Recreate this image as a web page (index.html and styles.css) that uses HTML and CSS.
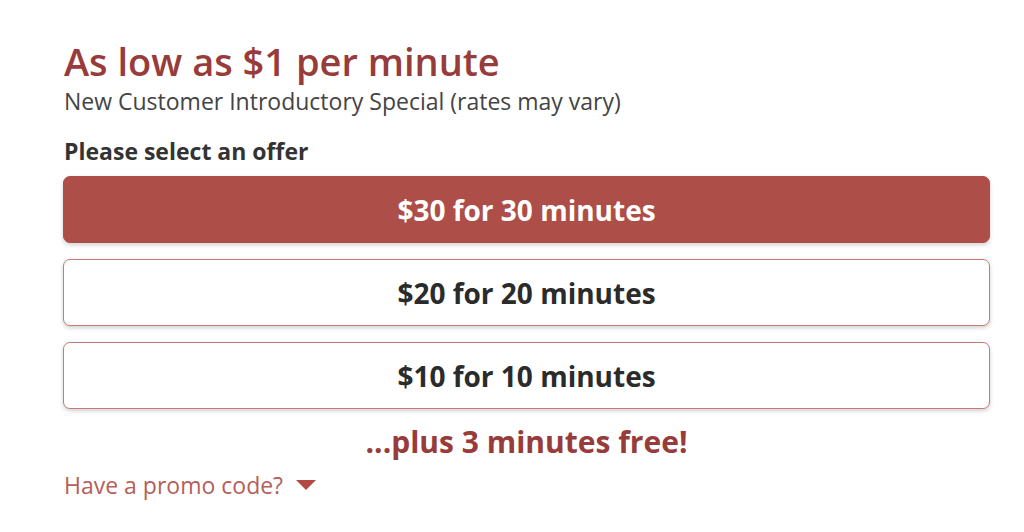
FILE: index.html
```html
<!DOCTYPE html>
<html>
<head>
<meta charset="utf-8">
<link rel="stylesheet" href="styles.css">
</head>
<body>
<div class="wrap">
  <h1 class="title">As low as $1 per minute</h1>
  <p class="sub">New Customer Introductory Special (rates may vary)</p>
  <p class="label">Please select an offer</p>
  <div class="offers">
    <button class="offer selected">$30 for 30 minutes</button>
    <button class="offer">$20 for 20 minutes</button>
    <button class="offer">$10 for 10 minutes</button>
  </div>
  <p class="bonus">...plus 3 minutes free!</p>
  <div class="promo">Have a promo code? <span class="tri"></span></div>
</div>
</body>
</html>
```
FILE: styles.css
```css
html, body { margin: 0; padding: 0; background: #fff; }
body { font-family: "Open Sans", "Liberation Sans", sans-serif; }
.wrap { margin-left: 63px; width: 927px; padding-top: 37px; }
.title { margin: 0 0 1px 1px; font-size: 38px; font-weight: 600; color: #973b3b; line-height: 48px; }
.sub { margin: 0 0 0 1px; font-size: 23px; color: #444; line-height: 30px; }
.label { margin: 20px 0 10px 1px; font-size: 23px; font-weight: 700; color: #333; line-height: 30px; }
.offers { display: flex; flex-direction: column; gap: 16px; }
.offer { height: 67px; border-radius: 7px; border: 1px solid #c77a74; background: #fff; font-family: inherit; font-size: 28px; font-weight: 700; color: #2b2b2b; box-shadow: 0 2px 4px rgba(0,0,0,0.18); padding: 0; }
.offer.selected { background: #ad4e48; border-color: #ad4e48; color: #fff; }
.bonus { margin: 13px 0 0; text-align: center; font-size: 30px; font-weight: 700; color: #973b3b; line-height: 40px; }
.promo { margin: 8px 0 0 1px; font-size: 23px; color: #b5605a; line-height: 30px; display: flex; align-items: center; gap: 13px; }
.tri { width: 0; height: 0; border-left: 10px solid transparent; border-right: 10px solid transparent; border-top: 10px solid #b14a44; }
```
